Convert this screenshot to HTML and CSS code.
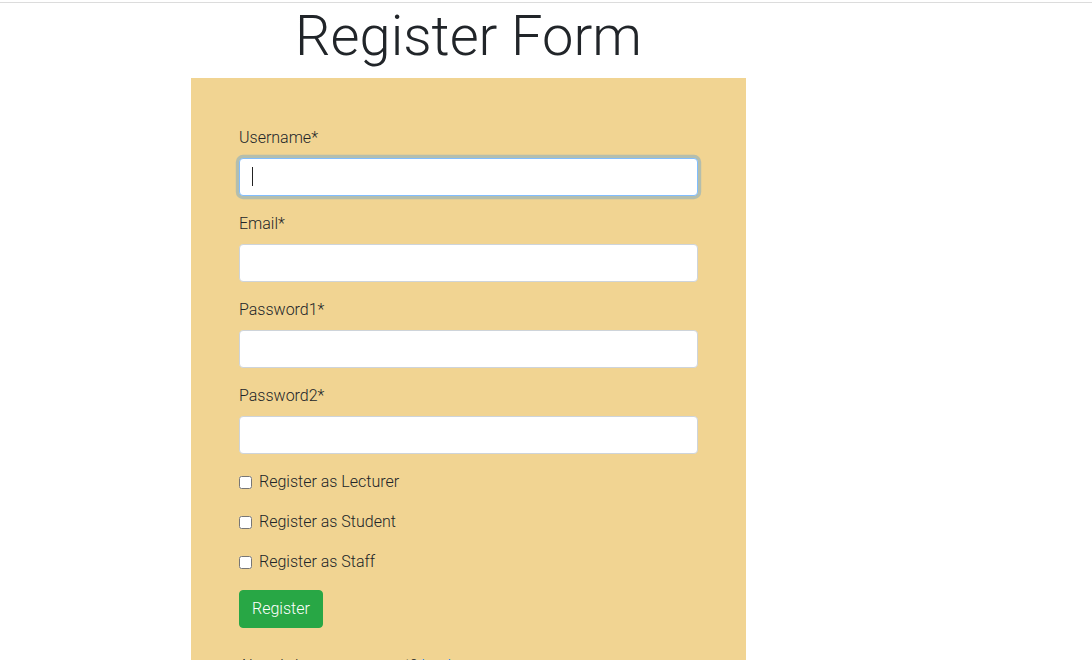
FILE: index.html
```html
<!DOCTYPE html>
<html lang="en">
<head>
<meta charset="utf-8">
<title>Register Form</title>
<link rel="stylesheet" href="styles.css">
</head>
<body>
<div class="topline"></div>
<main class="page">
  <section class="column">
    <h1 class="title">Register Form</h1>
    <form class="card">
      <div class="group">
        <label class="label" for="username">Username*</label>
        <div class="field-wrap">
          <input class="control focused" id="username" type="text">
          <span class="caret"></span>
        </div>
      </div>
      <div class="group">
        <label class="label" for="email">Email*</label>
        <input class="control" id="email" type="email">
      </div>
      <div class="group">
        <label class="label" for="password1">Password1*</label>
        <input class="control" id="password1" type="password">
      </div>
      <div class="group">
        <label class="label" for="password2">Password2*</label>
        <input class="control" id="password2" type="password">
      </div>
      <div class="check">
        <input class="check-input" id="lecturer" type="checkbox">
        <label class="check-label" for="lecturer">Register as Lecturer</label>
      </div>
      <div class="check">
        <input class="check-input" id="student" type="checkbox">
        <label class="check-label" for="student">Register as Student</label>
      </div>
      <div class="check">
        <input class="check-input" id="staff" type="checkbox">
        <label class="check-label" for="staff">Register as Staff</label>
      </div>
      <button class="btn" type="button">Register</button>
      <p class="already">Already have an account? <a class="link" href="#">Login</a></p>
    </form>
  </section>
</main>
</body>
</html>
```
FILE: styles.css
```css
* { box-sizing: border-box; }
html, body { margin: 0; padding: 0; }
body {
  font-family: Roboto, "Liberation Sans", sans-serif;
  font-weight: 300;
  font-size: 16px;
  line-height: 1.5;
  color: #212529;
  background: #fff;
  overflow: hidden;
}
.topline {
  margin-top: 2px;
  height: 1px;
  background: #dcdcdc;
}
.page {
  display: flex;
  padding-left: 191px;
}
.column {
  width: 555px;
  display: flex;
  flex-direction: column;
}
.title {
  margin: 0 0 8px;
  font-size: 56px;
  font-weight: 300;
  line-height: 1.2;
  text-align: center;
  color: #212529;
}
.card {
  background: #f1d492;
  padding: 48px 48px 40px;
  display: flex;
  flex-direction: column;
}
.group {
  display: flex;
  flex-direction: column;
  margin-bottom: 16px;
}
.label {
  margin-bottom: 8px;
  line-height: 24px;
}
.field-wrap { position: relative; }
.control {
  display: block;
  width: 100%;
  height: 38px;
  padding: 6px 12px;
  font: inherit;
  color: #495057;
  background: #fff;
  border: 1px solid #ced4da;
  border-radius: 4px;
  outline: none;
}
.control.focused {
  border-color: #80bdff;
  box-shadow: 0 0 0 3.2px rgba(0, 123, 255, 0.25);
}
.caret {
  position: absolute;
  left: 13px;
  top: 9px;
  width: 1px;
  height: 19px;
  background: #222;
}
.check {
  display: flex;
  align-items: center;
  height: 24px;
  margin-bottom: 16px;
}
.check-input {
  width: 13px;
  height: 13px;
  margin: 0 7px 0 0;
}
.check-label { line-height: 24px; }
.btn {
  align-self: flex-start;
  height: 38px;
  padding: 6px 12px;
  font: inherit;
  line-height: 24px;
  color: #fff;
  background: #28a745;
  border: 1px solid #28a745;
  border-radius: 4px;
}
.already {
  margin: 26px 0 0;
  line-height: 24px;
}
.link {
  color: #007bff;
  text-decoration: none;
}
```
